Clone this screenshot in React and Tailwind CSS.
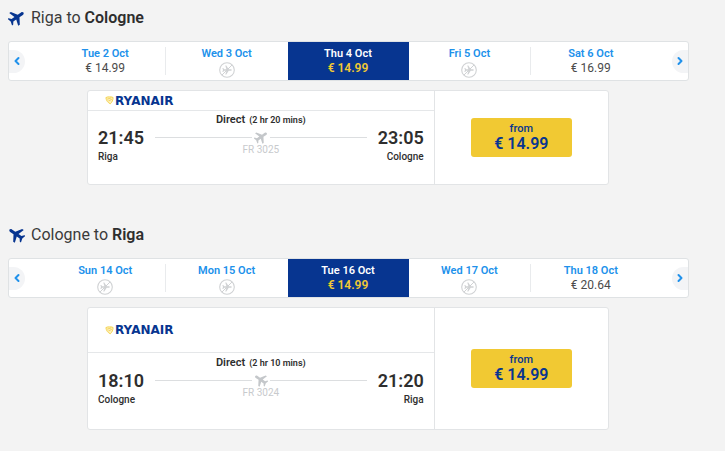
import clsx from "clsx";
import { ChevronLeft, ChevronRight } from "lucide-react";

const flights = [
  {
    from: "Riga",
    to: "Cologne",
    dates: [
      { day: "Tue 2 Oct", price: "€ 14.99" },
      { day: "Wed 3 Oct" },
      { day: "Thu 4 Oct", price: "€ 14.99", selected: true },
      { day: "Fri 5 Oct" },
      { day: "Sat 6 Oct", price: "€ 16.99" },
    ],
    departure: "21:45",
    arrival: "23:05",
    duration: "(2 hr 20 mins)",
    number: "FR 3025",
    price: "€ 14.99",
  },
  {
    from: "Cologne",
    to: "Riga",
    inbound: true,
    dates: [
      { day: "Sun 14 Oct" },
      { day: "Mon 15 Oct" },
      { day: "Tue 16 Oct", price: "€ 14.99", selected: true },
      { day: "Wed 17 Oct" },
      { day: "Thu 18 Oct", price: "€ 20.64" },
    ],
    departure: "18:10",
    arrival: "21:20",
    duration: "(2 hr 10 mins)",
    number: "FR 3024",
    price: "€ 14.99",
  },
];

function Plane({ inbound, className }) {
  return (
    <svg viewBox="0 0 24 24" fill="currentColor" className={className} aria-hidden="true">
      <g transform={inbound ? "rotate(-55 12 12)" : "rotate(55 12 12)"}>
        <path d="M23 16.8v-2.8L14.2 8.4V2.6C14.2 1 13 0 12 0S9.8 1 9.8 2.6v5.8L1 14v2.8L9.8 14v5L6.4 21.6v2L12 22l5.6 1.6v-2L14.2 19v-5z" />
      </g>
    </svg>
  );
}

function NoFlight() {
  return (
    <svg
      viewBox="0 0 16 16"
      className="size-4 text-[#d0d2d4]"
      fill="none"
      stroke="currentColor"
      role="img"
      aria-label="No flights"
    >
      <circle cx="8" cy="8" r="7.3" strokeWidth="1.1" />
      <path d="M3 13 13 3" strokeWidth="1" />
      <path
        d="M12.8 8c0-.5-.5-.8-1.2-.8H9.7L7.3 3.6h-1l1.1 3.6H5.2l-1-1.2h-.8L4 8l-.6 2h.8l1-1.2h2.2l-1.1 3.6h1l2.4-3.6h1.9c.7 0 1.2-.3 1.2-.8z"
        fill="currentColor"
        stroke="none"
      />
    </svg>
  );
}

function Logo() {
  return (
    <div className="flex items-center gap-px">
      <svg viewBox="0 0 9 9" className="size-[9px]" fill="none" aria-hidden="true">
        <path
          d="M.9 1.6C2 .9 3.2.8 4.5.9 6 .8 7.3.9 8.1 1.5 8.1 4 7 6.3 5.3 7.8 2.8 6.7 1.2 4.5.9 1.6z"
          fill="#fdf0bd"
          stroke="#f3d046"
          strokeWidth=".9"
        />
        <path d="M2.2 3.2 6.4 1.8M3.4 5 6.8 3.3" stroke="#f1c933" strokeWidth=".7" />
      </svg>
      <span className="font-['DejaVu_Sans',sans-serif] text-[12px] leading-3 font-bold text-[#073590]">
        RYANAIR
      </span>
    </div>
  );
}

function DateBar({ dates }) {
  return (
    <div className="flex items-stretch rounded-[3px] border border-[#dfe2e4] bg-white">
      <div className="flex w-9 items-center">
        <button
          type="button"
          aria-label="Earlier dates"
          className="flex h-[23px] w-4 items-center justify-center rounded-r-full bg-[#f3f4f6] text-[#2091eb]"
        >
          <ChevronLeft className="size-3" strokeWidth={4} />
        </button>
      </div>
      <div className="grid flex-1 grid-cols-5">
        {dates.map((date, i) => (
          <button
            key={date.day}
            type="button"
            className={clsx(
              "flex h-[38px] items-center",
              date.selected ? "bg-[#073590]" : "bg-white"
            )}
          >
            <span
              className={clsx(
                "flex h-7 flex-1 flex-col items-center border-r",
                i === 0 || i === 3 ? "border-[#e9ebed]" : "border-transparent"
              )}
            >
              <span
                className={clsx(
                  "text-[11px] leading-[14px] font-semibold",
                  date.selected ? "text-white" : "text-[#2091eb]"
                )}
              >
                {date.day}
              </span>
              {date.price ? (
                <span
                  className={clsx(
                    "text-[12px] leading-[14px]",
                    date.selected ? "font-semibold text-[#f1c933]" : "text-[#4b4b4b]"
                  )}
                >
                  {date.price}
                </span>
              ) : (
                <span className="pt-px">
                  <NoFlight />
                </span>
              )}
            </span>
          </button>
        ))}
      </div>
      <div className="flex w-9 items-center justify-end">
        <button
          type="button"
          aria-label="Later dates"
          className="flex h-[23px] w-4 items-center justify-center rounded-l-full bg-[#f3f4f6] text-[#2091eb]"
        >
          <ChevronRight className="size-3" strokeWidth={4} />
        </button>
      </div>
    </div>
  );
}

function FlightCard({ flight }) {
  return (
    <div className="mt-[9px] mr-20 ml-[79px] grid grid-cols-3 rounded-[3px] border border-[#e2e4e6] bg-white">
      <div className="col-span-2 border-r border-[#e2e4e6]">
        <div
          className={clsx(
            "flex items-center border-b border-[#e5e7e9] pl-[17px]",
            flight.inbound ? "h-[45px]" : "h-5"
          )}
        >
          <Logo />
        </div>
        <div
          className={clsx(
            "grid grid-cols-[46px_1fr_46px] gap-x-[11px] px-[10px] text-[#2e2e2e]",
            flight.inbound ? "pt-[3px] pb-[21px]" : "pt-0.5 pb-[19px]"
          )}
        >
          <div className="pt-[15px]">
            <p className="text-[18px] leading-5 font-semibold">{flight.departure}</p>
            <p className="text-[10px] leading-[17px] font-medium">{flight.from}</p>
          </div>
          <div className="text-center">
            <p className="flex items-center justify-center gap-1 leading-[14px] font-semibold">
              <span className="text-[11px]">Direct</span>
              <span className="text-[9px]">{flight.duration}</span>
            </p>
            <div className="flex h-5 items-center text-[#c4c7ca]">
              <span className="h-px flex-1 bg-[#dcdee0]" />
              <Plane inbound={flight.inbound} className="mx-0.5 size-[14px]" />
              <span className="h-px flex-1 bg-[#dcdee0]" />
            </div>
            <p className="text-[10px] leading-[6px] text-[#c8cacd]">{flight.number}</p>
          </div>
          <div className="pt-[15px] text-right">
            <p className="text-[18px] leading-5 font-semibold">{flight.arrival}</p>
            <p className="text-[10px] leading-[17px] font-medium">{flight.to}</p>
          </div>
        </div>
      </div>
      <div className="flex items-center justify-center">
        <button
          type="button"
          className="flex w-[101px] flex-col items-center rounded-[3px] bg-[#f1c933] py-1 text-[#073590]"
        >
          <span className="text-[11px] leading-[13px] font-medium">from</span>
          <span className="text-[16px] leading-[18px] font-semibold">{flight.price}</span>
        </button>
      </div>
    </div>
  );
}

function App() {
  return (
    <main className="flex min-h-screen flex-col gap-[39px] bg-[#f3f3f3] pt-[7px] pr-9 pb-5 pl-2 font-[Roboto,sans-serif]">
      {flights.map((flight) => (
        <section key={flight.number}>
          <h2 className="mb-[13px] flex items-center gap-1.5 text-[16px] leading-[21px] text-[#3a3a3a]">
            <Plane inbound={flight.inbound} className="size-[17px] text-[#073590]" />
            <span>
              {flight.from} to <strong className="font-semibold text-[#2e2e2e]">{flight.to}</strong>
            </span>
          </h2>
          <DateBar dates={flight.dates} />
          <FlightCard flight={flight} />
        </section>
      ))}
    </main>
  );
}

export default App;
